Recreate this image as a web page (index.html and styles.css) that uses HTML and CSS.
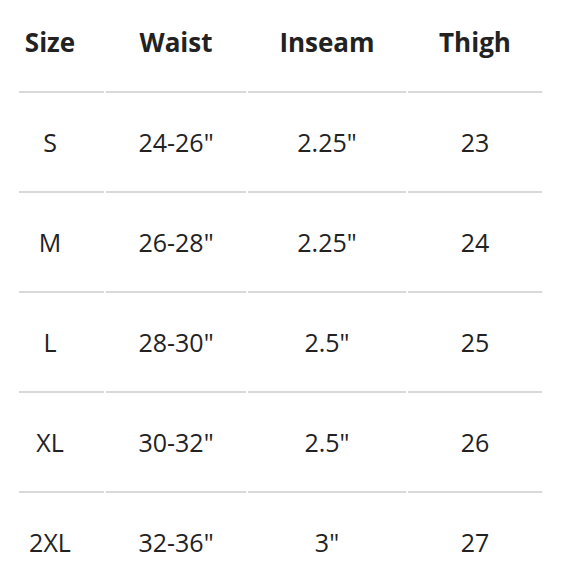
FILE: index.html
```html
<!DOCTYPE html>
<html>
<head>
<meta charset="utf-8">
<link rel="stylesheet" href="styles.css">
</head>
<body>
<table class="size-table">
  <colgroup>
    <col class="c-size"><col class="c-waist"><col class="c-inseam"><col class="c-thigh">
  </colgroup>
  <thead>
    <tr><th class="first">Size</th><th>Waist</th><th>Inseam</th><th>Thigh</th></tr>
  </thead>
  <tbody>
    <tr><td class="first">S</td><td>24-26"</td><td>2.25"</td><td>23</td></tr>
    <tr><td class="first">M</td><td>26-28"</td><td>2.25"</td><td>24</td></tr>
    <tr><td class="first">L</td><td>28-30"</td><td>2.5"</td><td>25</td></tr>
    <tr><td class="first">XL</td><td>30-32"</td><td>2.5"</td><td>26</td></tr>
    <tr><td class="first">2XL</td><td>32-36"</td><td>3"</td><td>27</td></tr>
  </tbody>
</table>
</body>
</html>
```
FILE: styles.css
```css
html, body {
  margin: 0;
  padding: 0;
  background: #ffffff;
  overflow: hidden;
}
body {
  font-family: "Open Sans", "Liberation Sans", sans-serif;
  color: #222222;
}
.size-table {
  table-layout: fixed;
  border-collapse: separate;
  border-spacing: 2px 0;
  margin-left: 17px;
  width: 527px;
}
.c-size { width: 85px; }
.c-waist { width: 140px; }
.c-inseam { width: 158px; }
.c-thigh { width: 134px; }
.size-table th,
.size-table td {
  border-bottom: 2px solid #d9d9d9;
  text-align: center;
  vertical-align: middle;
  padding: 0;
  box-sizing: border-box;
}
.size-table th {
  height: 93px;
  padding-bottom: 8px;
  font-weight: 700;
  font-size: 26px;
  line-height: 30px;
}
.size-table td {
  height: 100px;
  padding-top: 0;
  font-weight: 400;
  font-size: 25px;
  line-height: 30px;
}
.size-table .first {
  padding-right: 23px;
}
```
